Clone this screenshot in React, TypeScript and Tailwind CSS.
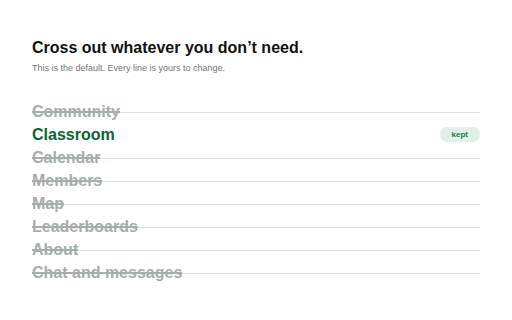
const ITEMS = [
  { name: "Community", kept: false },
  { name: "Classroom", kept: true },
  { name: "Calendar", kept: false },
  { name: "Members", kept: false },
  { name: "Map", kept: false },
  { name: "Leaderboards", kept: false },
  { name: "About", kept: false },
  { name: "Chat and messages", kept: false },
];

export default function App() {
  return (
    <div
      className="w-[512px] h-[320px] bg-white px-8 pt-[38px]"
      style={{ fontFamily: '"Liberation Sans", Arial, sans-serif' }}
    >
      <h1 className="text-[16px] leading-5 font-bold text-[#111]">
        Cross out whatever you don’t need.
      </h1>
      <p className="mt-[4px] text-[9px] leading-3 text-[#777]">
        This is the default. Every line is yours to change.
      </p>

      <ul className="mt-[26px] flex flex-col">
        {ITEMS.map((item) => (
          <li key={item.name} className="flex items-center h-[23px]">
            {item.kept ? (
              <>
                <span className="text-[16px] font-bold text-[#0b6432]">{item.name}</span>
                <span className="ml-auto px-3 h-[15px] flex items-center rounded-full bg-[#dff0e6] text-[8px] font-bold text-[#1d7a4a]">
                  kept
                </span>
              </>
            ) : (
              <>
                <span className="text-[16px] font-bold text-[#a6aeaa] line-through decoration-[1.5px]">
                  {item.name}
                </span>
                <span className="flex-1 h-px bg-[#dde1df] mt-[2px]" />
              </>
            )}
          </li>
        ))}
      </ul>
    </div>
  );
}
